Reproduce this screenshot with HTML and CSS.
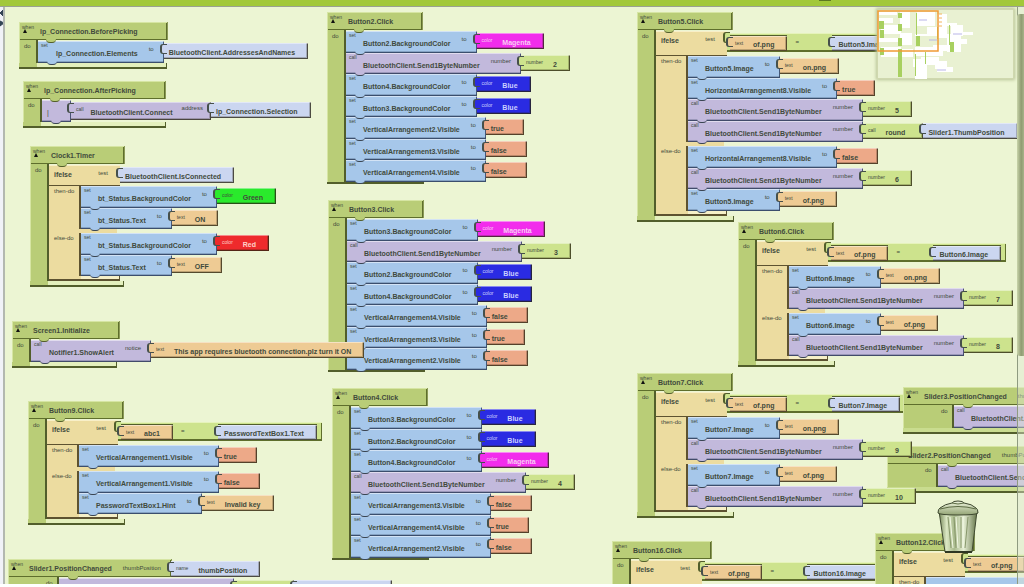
FILE: index.html
```html
<!DOCTYPE html>
<html lang="en">
<head>
<meta charset="utf-8">
<title>Blocks Editor</title>
<link rel="stylesheet" href="styles.css">
</head>
<body>
<header class="topbar"><span class="grip"></span></header>
<div class="frame">
<aside class="gutter"><svg width="5" height="24" viewBox="0 0 5 24"><path d="M4 2L0 6l4 4M0 14v5l4-3z" fill="#345" stroke="#345"/></svg></aside>
<main class="canvas">

<section class="event button5">
  <div class="head"><span class="when">when</span><h2>Button5.Click</h2></div>
  <div class="body"><span class="do">do</span>
    <div class="ifelse">
      <div class="row"><div class="test"><span>ifelse</span><span class="s">test</span></div><div class="eq"><div class="val text"><span class="k">text</span>of.png</div><span class="sign">=</span><div class="val get">Button5.Image</div></div></div>
      <div class="branch"><span class="s">then-do</span><div class="stack">
        <div class="row"><div class="op set"><span class="k">set</span>Button5.Image<span class="s">to</span></div><div class="val text"><span class="k">text</span>on.png</div></div>
        <div class="row"><div class="op set"><span class="k">set</span>HorizontalArrangement8.Visible<span class="s">to</span></div><div class="val logic">true</div></div>
        <div class="row"><div class="op call"><span class="k">call</span>BluetoothClient.Send1ByteNumber<span class="s">number</span></div><div class="val num"><span class="k">number</span>5</div></div>
        <div class="row"><div class="op call"><span class="k">call</span>BluetoothClient.Send1ByteNumber<span class="s">number</span></div><div class="val num"><span class="k">call</span>round</div><div class="val get">Slider1.ThumbPosition</div></div>
      </div></div>
      <div class="branch"><span class="s">else-do</span><div class="stack">
        <div class="row"><div class="op set"><span class="k">set</span>HorizontalArrangement8.Visible<span class="s">to</span></div><div class="val logic">false</div></div>
        <div class="row"><div class="op call"><span class="k">call</span>BluetoothClient.Send1ByteNumber<span class="s">number</span></div><div class="val num"><span class="k">number</span>6</div></div>
        <div class="row"><div class="op set"><span class="k">set</span>Button5.Image<span class="s">to</span></div><div class="val text"><span class="k">text</span>of.png</div></div>
      </div></div>
      <div class="foot"></div>
    </div>
  </div>
  <div class="foot"></div>
</section>

<section class="event button6">
  <div class="head"><span class="when">when</span><h2>Button6.Click</h2></div>
  <div class="body"><span class="do">do</span>
    <div class="ifelse">
      <div class="row"><div class="test"><span>ifelse</span><span class="s">test</span></div><div class="eq"><div class="val text"><span class="k">text</span>of.png</div><span class="sign">=</span><div class="val get">Button6.Image</div></div></div>
      <div class="branch"><span class="s">then-do</span><div class="stack">
        <div class="row"><div class="op set"><span class="k">set</span>Button6.Image<span class="s">to</span></div><div class="val text"><span class="k">text</span>on.png</div></div>
        <div class="row"><div class="op call"><span class="k">call</span>BluetoothClient.Send1ByteNumber<span class="s">number</span></div><div class="val num"><span class="k">number</span>7</div></div>
      </div></div>
      <div class="branch"><span class="s">else-do</span><div class="stack">
        <div class="row"><div class="op set"><span class="k">set</span>Button6.Image<span class="s">to</span></div><div class="val text"><span class="k">text</span>of.png</div></div>
        <div class="row"><div class="op call"><span class="k">call</span>BluetoothClient.Send1ByteNumber<span class="s">number</span></div><div class="val num"><span class="k">number</span>8</div></div>
      </div></div>
      <div class="foot"></div>
    </div>
  </div>
  <div class="foot"></div>
</section>

<section class="event slider2">
  <div class="head wide"><span class="when"></span><h2>Slider2.PositionChanged</h2><span class="s">thumbPosition</span></div>
  <div class="body"><span class="do">do</span>
    <div class="stack">
      <div class="row"><div class="op call"><span class="k">call</span>BluetoothClient.Send1ByteNumber<span class="s">number</span></div></div>
    </div>
  </div>
  <div class="foot"></div>
</section>

<section class="event button7">
  <div class="head"><span class="when">when</span><h2>Button7.Click</h2></div>
  <div class="body"><span class="do">do</span>
    <div class="ifelse">
      <div class="row"><div class="test"><span>ifelse</span><span class="s">test</span></div><div class="eq"><div class="val text"><span class="k">text</span>of.png</div><span class="sign">=</span><div class="val get">Button7.Image</div></div></div>
      <div class="branch"><span class="s">then-do</span><div class="stack">
        <div class="row"><div class="op set"><span class="k">set</span>Button7.Image<span class="s">to</span></div><div class="val text"><span class="k">text</span>on.png</div></div>
        <div class="row"><div class="op call"><span class="k">call</span>BluetoothClient.Send1ByteNumber<span class="s">number</span></div><div class="val num"><span class="k">number</span>9</div></div>
      </div></div>
      <div class="branch"><span class="s">else-do</span><div class="stack">
        <div class="row"><div class="op set"><span class="k">set</span>Button7.Image<span class="s">to</span></div><div class="val text"><span class="k">text</span>of.png</div></div>
        <div class="row"><div class="op call"><span class="k">call</span>BluetoothClient.Send1ByteNumber<span class="s">number</span></div><div class="val num"><span class="k">number</span>10</div></div>
      </div></div>
      <div class="foot"></div>
    </div>
  </div>
  <div class="foot"></div>
</section>

<section class="event slider3">
  <div class="head wide"><span class="when">when</span><h2>Slider3.PositionChanged</h2><span class="s">thumbPosition</span></div>
  <div class="body"><span class="do">do</span>
    <div class="stack">
      <div class="row"><div class="op call"><span class="k">call</span>BluetoothClient.Send1ByteNumber<span class="s">number</span></div></div>
    </div>
  </div>
  <div class="foot"></div>
</section>

<section class="event button16">
  <div class="head"><span class="when">when</span><h2>Button16.Click</h2></div>
  <div class="body"><span class="do">do</span>
    <div class="ifelse">
      <div class="row"><div class="test"><span>ifelse</span><span class="s">test</span></div><div class="eq"><div class="val text"><span class="k">text</span>of.png</div><span class="sign">=</span><div class="val get">Button16.Image</div></div></div>
    </div>
  </div>
</section>

<section class="event button12">
  <div class="head"><span class="when">when</span><h2>Button12.Click</h2></div>
  <div class="body"><span class="do">do</span>
    <div class="ifelse">
      <div class="row"><div class="test"><span>ifelse</span><span class="s">test</span></div><div class="eq"><div class="val text"><span class="k">text</span>of.png</div><span class="sign">=</span><div class="val get">Button12.Image</div></div></div>
      <div class="branch"><span class="s">then-do</span><div class="stack">
        <div class="row"><div class="op set blank"></div></div>
      </div></div>
    </div>
  </div>
</section>

<section class="event button2">
  <div class="head"><span class="when">when</span><h2>Button2.Click</h2></div>
  <div class="body"><span class="do">do</span>
    <div class="stack">
      <div class="row"><div class="op set"><span class="k">set</span>Button2.BackgroundColor<span class="s">to</span></div><div class="val magenta"><span class="k">color</span>Magenta</div></div>
      <div class="row"><div class="op call"><span class="k">call</span>BluetoothClient.Send1ByteNumber<span class="s">number</span></div><div class="val num"><span class="k">number</span>2</div></div>
      <div class="row"><div class="op set"><span class="k">set</span>Button4.BackgroundColor<span class="s">to</span></div><div class="val blue"><span class="k">color</span>Blue</div></div>
      <div class="row"><div class="op set"><span class="k">set</span>Button3.BackgroundColor<span class="s">to</span></div><div class="val blue"><span class="k">color</span>Blue</div></div>
      <div class="row"><div class="op set"><span class="k">set</span>VerticalArrangement2.Visible<span class="s">to</span></div><div class="val logic">true</div></div>
      <div class="row"><div class="op set"><span class="k">set</span>VerticalArrangement3.Visible<span class="s">to</span></div><div class="val logic">false</div></div>
      <div class="row"><div class="op set"><span class="k">set</span>VerticalArrangement4.Visible<span class="s">to</span></div><div class="val logic">false</div></div>
    </div>
  </div>
  <div class="foot"></div>
</section>

<section class="event button3">
  <div class="head"><span class="when">when</span><h2>Button3.Click</h2></div>
  <div class="body"><span class="do">do</span>
    <div class="stack">
      <div class="row"><div class="op set"><span class="k">set</span>Button3.BackgroundColor<span class="s">to</span></div><div class="val magenta"><span class="k">color</span>Magenta</div></div>
      <div class="row"><div class="op call"><span class="k">call</span>BluetoothClient.Send1ByteNumber<span class="s">number</span></div><div class="val num"><span class="k">number</span>3</div></div>
      <div class="row"><div class="op set"><span class="k">set</span>Button2.BackgroundColor<span class="s">to</span></div><div class="val blue"><span class="k">color</span>Blue</div></div>
      <div class="row"><div class="op set"><span class="k">set</span>Button4.BackgroundColor<span class="s">to</span></div><div class="val blue"><span class="k">color</span>Blue</div></div>
      <div class="row"><div class="op set"><span class="k">set</span>VerticalArrangement4.Visible<span class="s">to</span></div><div class="val logic">false</div></div>
      <div class="row"><div class="op set"><span class="k">set</span>VerticalArrangement3.Visible<span class="s">to</span></div><div class="val logic">true</div></div>
      <div class="row"><div class="op set"><span class="k">set</span>VerticalArrangement2.Visible<span class="s">to</span></div><div class="val logic">false</div></div>
    </div>
  </div>
  <div class="foot"></div>
</section>

<section class="event button4">
  <div class="head"><span class="when">when</span><h2>Button4.Click</h2></div>
  <div class="body"><span class="do">do</span>
    <div class="stack">
      <div class="row"><div class="op set"><span class="k">set</span>Button3.BackgroundColor<span class="s">to</span></div><div class="val blue"><span class="k">color</span>Blue</div></div>
      <div class="row"><div class="op set"><span class="k">set</span>Button2.BackgroundColor<span class="s">to</span></div><div class="val blue"><span class="k">color</span>Blue</div></div>
      <div class="row"><div class="op set"><span class="k">set</span>Button4.BackgroundColor<span class="s">to</span></div><div class="val magenta"><span class="k">color</span>Magenta</div></div>
      <div class="row"><div class="op call"><span class="k">call</span>BluetoothClient.Send1ByteNumber<span class="s">number</span></div><div class="val num"><span class="k">number</span>4</div></div>
      <div class="row"><div class="op set"><span class="k">set</span>VerticalArrangement3.Visible<span class="s">to</span></div><div class="val logic">false</div></div>
      <div class="row"><div class="op set"><span class="k">set</span>VerticalArrangement4.Visible<span class="s">to</span></div><div class="val logic">true</div></div>
      <div class="row"><div class="op set"><span class="k">set</span>VerticalArrangement2.Visible<span class="s">to</span></div><div class="val logic">false</div></div>
    </div>
  </div>
  <div class="foot"></div>
</section>

<section class="event before open">
  <div class="head"><span class="when">when</span><h2>lp_Connection.BeforePicking</h2></div>
  <div class="body"><span class="do">do</span>
    <div class="stack">
      <div class="row"><div class="op set"><span class="k">set</span>lp_Connection.Elements<span class="s">to</span></div><div class="val get">BluetoothClient.AddressesAndNames</div></div>
    </div>
  </div>
  <div class="foot"></div>
</section>

<section class="event after open">
  <div class="head"><span class="when">when</span><h2>lp_Connection.AfterPicking</h2></div>
  <div class="body"><span class="do">do</span>
    <div class="stack">
      <div class="row"><div class="op call slim">|</div><div class="val call fn"><span class="k">call</span>BluetoothClient.Connect<span class="s">address</span></div><div class="val get">lp_Connection.Selection</div></div>
    </div>
  </div>
  <div class="foot"></div>
</section>

<section class="event clock">
  <div class="head"><span class="when">when</span><h2>Clock1.Timer</h2></div>
  <div class="body"><span class="do">do</span>
    <div class="ifelse">
      <div class="row"><div class="test"><span>ifelse</span><span class="s">test</span></div><div class="val get">BluetoothClient.IsConnected</div></div>
      <div class="branch"><span class="s">then-do</span><div class="stack">
        <div class="row"><div class="op set"><span class="k">set</span>bt_Status.BackgroundColor<span class="s">to</span></div><div class="val green"><span class="k">color</span>Green</div></div>
        <div class="row"><div class="op set"><span class="k">set</span>bt_Status.Text<span class="s">to</span></div><div class="val text"><span class="k">text</span>ON</div></div>
      </div></div>
      <div class="branch"><span class="s">else-do</span><div class="stack">
        <div class="row"><div class="op set"><span class="k">set</span>bt_Status.BackgroundColor<span class="s">to</span></div><div class="val red"><span class="k">color</span>Red</div></div>
        <div class="row"><div class="op set"><span class="k">set</span>bt_Status.Text<span class="s">to</span></div><div class="val text"><span class="k">text</span>OFF</div></div>
      </div></div>
      <div class="foot"></div>
    </div>
  </div>
  <div class="foot"></div>
</section>

<section class="event screen1 open">
  <div class="head"><span class="when">when</span><h2>Screen1.Initialize</h2></div>
  <div class="body"><span class="do">do</span>
    <div class="stack">
      <div class="row"><div class="op call"><span class="k">call</span>Notifier1.ShowAlert<span class="s">notice</span></div><div class="val text"><span class="k">text</span>This app requires bluetooth connection.plz turn it ON</div></div>
    </div>
  </div>
  <div class="foot"></div>
</section>

<section class="event button9">
  <div class="head"><span class="when">when</span><h2>Button9.Click</h2></div>
  <div class="body"><span class="do">do</span>
    <div class="ifelse">
      <div class="row"><div class="test"><span>ifelse</span><span class="s">test</span></div><div class="eq"><div class="val text"><span class="k">text</span>abc1</div><span class="sign">=</span><div class="val get">PasswordTextBox1.Text</div></div></div>
      <div class="branch"><span class="s">then-do</span><div class="stack">
        <div class="row"><div class="op set"><span class="k">set</span>VerticalArrangement1.Visible<span class="s">to</span></div><div class="val logic">true</div></div>
      </div></div>
      <div class="branch"><span class="s">else-do</span><div class="stack">
        <div class="row"><div class="op set"><span class="k">set</span>VerticalArrangement1.Visible<span class="s">to</span></div><div class="val logic">false</div></div>
        <div class="row"><div class="op set"><span class="k">set</span>PasswordTextBox1.Hint<span class="s">to</span></div><div class="val text"><span class="k">text</span>Invalid key</div></div>
      </div></div>
      <div class="foot"></div>
    </div>
  </div>
  <div class="foot"></div>
</section>

<section class="event slider1">
  <div class="row"><div class="head wide"><span class="when">when</span><h2>Slider1.PositionChanged</h2><span class="s">thumbPosition</span></div><div class="val get"><span class="k">name</span>thumbPosition</div></div>
  <div class="body"><span class="do">do</span>
    <div class="stack">
      <div class="row"><div class="op call blank"></div><div class="val num blank"></div><div class="val get blank"></div></div>
    </div>
  </div>
</section>

<div class="edge"></div>
<div class="thumb"></div>

<div class="minimap">
<svg viewBox="0 0 136 70" width="136" height="70">
  <g fill="#fff">
    <path d="M2 3h18v3H2zM2 9h14v5H2zM4 16h20v9H4zM2 29h22v4H2zM4 38h20v10H4zM23 3h10v16H23zM23 24h12v12H23zM24 40h12v8H24zM40 3h18v14H40zM50 18h14v9H50zM38 25h18v2H38zM38 38h20v9H38zM60 5h10v24H60zM64 14h16v3H64zM56 36h14v6H56zM70 25h14v18H70zM74 16h12v11H74zM36 50h14v8H36zM38 56h12v14H38zM52 42h14v5H52zM44 48h18v8H44zM58 52h12v8H58zM60 58h16v5H60zM76 30h14v5H76zM80 23h16v3H80z"/>
  </g>
  <g fill="#a8d060">
    <path d="M21 4h4v5h-4zM21 15h4v7h-4zM21 29h4v8h-4zM21 40h4v7h-4zM2 12h5v8H2zM3 21h4v8H3zM3 39h4v7H3zM39 4h1v22h-1zM39 27h4v10h-4zM21 43h4v25h-4zM72 16h1v20h-1zM73 33h4v10h-4zM38 45h1v22h-1zM48 43h1v12h-1zM60 18h1v12h-1z"/>
  </g>
  <path d="M42 11h8M76 25h9M60 61h9M52 31h8" stroke="#b9b5e8" stroke-width="1"/>
  <path d="M62 5h3M62 9h3M62 13h3M62 17h3" stroke="#f3b45c"/>
  <rect x="1" y="2" width="60" height="40" fill="none" stroke="#f09a35" stroke-width="1.5"/>
</svg>
</div>

<svg class="trash" viewBox="0 0 44 56" width="44" height="56">
  <defs>
    <linearGradient id="can" x1="0" x2="1" y1="0" y2="0"><stop offset="0" stop-color="#76885a"/><stop offset=".2" stop-color="#dbe7c3"/><stop offset=".4" stop-color="#a9ba8d"/><stop offset=".65" stop-color="#e6efd4"/><stop offset="1" stop-color="#66764a"/></linearGradient>
    <linearGradient id="lid" x1="0" x2="0" y1="0" y2="1"><stop offset="0" stop-color="#eef5de"/><stop offset="1" stop-color="#93a475"/></linearGradient>
  </defs>
  <path d="M3 12L9 53h27l5-41z" fill="url(#can)" stroke="#3e482f" stroke-width="1"/>
  <path d="M12 18l3 31M18 18l2 31M25 18v31M32 18l-3 31" stroke="#87976b" stroke-width="1" fill="none"/>
  <path d="M14 18l3 31M20 18l2 31M27 18v31" stroke="#f2f8e4" stroke-width="1" fill="none"/>
  <path d="M2 14q0-4 2-5 5-4 12-5 1-2 6-2t6 2q8 1 12 5 2 1 2 5-2 2-20 2T2 14z" fill="url(#lid)" stroke="#3e482f" stroke-width="1"/>
  <path d="M4 10q18-5 36 0M16 4q6 2 12 0" fill="none" stroke="#5c6b43" stroke-width="1"/>
  <path d="M9 53h27" fill="none" stroke="#2d3622" stroke-width="2"/>
</svg>
</main>
</div>
</body>
</html>
```

FILE: styles.css
```css
* { box-sizing: border-box; }

body {
  margin: 0;
  height: 100vh;
  display: flex;
  flex-direction: column;
  overflow: hidden;
  background: #fff;
  color: #414a3c;
  font: bold 7px/9px "Liberation Sans", Arial, sans-serif;
}

.topbar {
  flex: none;
  height: 7px;
  background: #a2c83a;
  border-bottom: 1px solid #9aa192;
}
.grip {
  display: block;
  width: 12px;
  height: 1px;
  margin-left: 80%;
  background: #5d7722;
}

.frame {
  flex: 1;
  display: flex;
  margin-bottom: 3px;
  min-height: 0;
}
.gutter {
  flex: none;
  width: 5px;
  background: #f1f2f8;
  border-right: 2px solid #b3b8b0;
  overflow: hidden;
}
.canvas {
  flex: 1;
  position: relative;
  overflow: hidden;
  background: #ecf5d3;
}

/* Event blocks on the free canvas */
.event { position: absolute; width: max-content; isolation: isolate; }
.before { left: 14px; top: 15px; }
.after { left: 18px; top: 74px; }
.clock { left: 25px; top: 139px; }
.screen1 { left: 7px; top: 314px; }
.button9 { left: 23px; top: 394px; }
.slider1 { left: 3px; top: 552px; }
.button2 { left: 322px; top: 5px; }
.button3 { left: 323px; top: 193px; }
.button4 { left: 327px; top: 381px; }
.button5 { left: 632px; top: 5px; }
.button6 { left: 733px; top: 215px; }
.button7 { left: 632px; top: 366px; }
.slider3 { left: 898px; top: 380px; }
.slider2 { left: 882px; top: 439px; }
.button16 { left: 607px; top: 534px; }
.button12 { left: 870px; top: 526px; }

.head {
  position: relative;
  display: flex;
  align-items: center;
  width: max-content;
  height: 18px;
  padding-right: 29px;
  background: #b9cd77;
  box-shadow: inset 1px 1px #d6e5a3, inset -1px -1px #5e6e2c, 1px 0 #8b9a57;
}
.head.wide { padding-right: 10px; gap: 11px; }
.head.wide .when { margin-right: -11px; }
.head h2 { margin: 0; font: inherit; }
.when {
  position: relative;
  align-self: flex-start;
  width: 21px;
  padding: 2px 0 0 3px;
  font-size: 5px;
  font-weight: normal;
  line-height: 6px;
}
.when::after {
  content: "";
  position: absolute;
  left: 4px;
  top: 7px;
  border: 2px solid transparent;
  border-bottom: 4px solid #111;
  border-top: 0;
}

.body {
  display: flex;
  width: max-content;
  margin-top: -1px;
  padding-top: 2px;
  background: linear-gradient(90deg, #d6e5a3 1px, #b9cd77 1px, #b9cd77 17px, #525e2b 17px, #525e2b 19px, transparent 19px);
}
.do {
  width: 19px;
  padding: 2px 0 0 5px;
  font-size: 6px;
  font-weight: normal;
  line-height: 6px;
}
.slider1 .body, .slider2 .body, .slider3 .body {
  background: linear-gradient(90deg, #d6e5a3 1px, #b9cd77 1px, #b9cd77 49px, #525e2b 49px, #525e2b 51px, transparent 51px);
}
.slider1 .do, .slider2 .do, .slider3 .do { width: 51px; padding-left: 38px; }

.event > .foot {
  width: 97px;
  height: 2px;
  background: #525e2b;
}
.event.open > .foot,
.button5 > .foot, .button6 > .foot, .button7 > .foot, .button9 > .foot,
.clock > .foot, .slider2 > .foot, .slider3 > .foot {
  height: 6px;
  border-bottom: 2px solid #525e2b;
  border-right: 1px solid #525e2b;
  background: linear-gradient(90deg, #b9cd77 18px, #e4f0bd 18px);
}
.event.before > .foot { width: 148px; }
.event.after > .foot { width: 143px; }
.event.clock > .foot { width: 94px; }
.event.screen1 > .foot { width: 105px; }
.event.slider2 > .foot, .event.slider3 > .foot { width: 200px; background: #c9dc8f; }

.row { display: flex; align-items: flex-start; }

/* Statement blocks */
.op {
  position: relative;
  display: flex;
  align-items: center;
  height: 21px;
  padding: 3px 10px 0 0;
  box-shadow: inset 0 1px rgba(255, 255, 255, .5), inset -1px -1px rgba(35, 50, 80, .75), inset 0 -2px rgba(35, 50, 80, .25);
}
.stack > .row:nth-child(odd) > .op { height: 22px; }
.op .k { width: 17px; padding-left: 3px; margin-top: -2px; }
.open .op .k { width: 18px; }
.set { background-color: #a6c7ea; }
.call { background-color: #c2b9dc; }

.op::after, .head::after {
  content: "";
  position: absolute;
  z-index: 1;
  left: 9px;
  bottom: -2px;
  width: 10px;
  height: 4px;
  border-bottom: 1px solid #3a4552;
  border-radius: 0 0 4px 4px;
  background: inherit;
}
.head::after { left: 27px; bottom: -3px; border-color: #525e2b; }
.wide::after { left: 60px; }

.k {
  align-self: flex-start;
  font-size: 5px;
  font-weight: normal;
  line-height: 6px;
}
.s {
  font-size: 6px;
  font-weight: normal;
  line-height: 6px;
}
.op .s { align-self: flex-start; margin: 2px 0 0 11px; }
.slim { width: 29px; padding-left: 5px; font-weight: normal; }

/* Value blocks */
.val {
  position: relative;
  display: flex;
  align-items: center;
  height: 16px;
  margin-top: 2px;
  padding: 2px 13px 0 5px;
  box-shadow: inset 0 1px rgba(255, 255, 255, .45), inset -1px -1px rgba(40, 35, 15, .7), inset -2px -2px rgba(40, 35, 15, .25);
}
.val::before {
  content: "";
  position: absolute;
  left: -4px;
  top: 1px;
  width: 5px;
  height: 8px;
  border: 1px solid #46504b;
  border-width: 1px 0 1px 2px;
  border-radius: 3px 0 0 3px;
  background: inherit;
}
.val .k { margin: 2px 10px 0 0; }
.get { background-color: #cbd6f0; }
.text { background-color: #eecb94; }
.num { background-color: #cde38d; }
.num:has(+ .get) { padding-right: 18px; }
.logic { background-color: #eda988; padding-right: 20px; }
.magenta { background-color: #f22cec; color: #f9cdf4; }
.blue { background-color: #2a2be2; color: #cbd0ff; }
.green { background-color: #2aea2c; }
.red { background-color: #ee2a2c; color: #ffd2c8; }
.fn { height: 18px; padding-right: 8px; background-color: #c2b9dc; }
.fn .k { margin-right: 7px; }
.fn .s { align-self: flex-start; margin: 1px 0 0 9px; }

.blank { width: 60px; }
.op.blank { width: 175px; }
.get.blank { width: 98px; }

/* Conditional blocks */
.ifelse {
  background: linear-gradient(90deg, #ecdca0 30px, #5d5230 30px, #5d5230 32px, transparent 32px);
}
.test {
  display: flex;
  align-items: center;
  justify-content: space-between;
  width: 71px;
  height: 21px;
  padding: 0 12px 2px 5px;
  background: #ecdca0;
  border-bottom: 1px solid #5d5230;
  box-shadow: inset 0 1px #f8efc8;
}
.row:has(> .eq) > .test { height: 25px; padding-bottom: 5px; }
.test .s { margin-top: -3px; }
.branch { display: flex; }
.branch > .s { width: 32px; padding: 2px 0 0 5px; }
.branch + .branch { border-top: 4px solid #ecdca0; border-image: linear-gradient(90deg, #ecdca0 70px, transparent 70px) 4; border-image-width: 4px 0 0; }
.ifelse > .foot {
  width: 71px;
  height: 5px;
  border-bottom: 2px solid #5d5230;
  border-right: 1px solid #5d5230;
  background: linear-gradient(90deg, #ecdca0 32px, #f6f0c8 32px);
}

.eq {
  position: relative;
  display: flex;
  align-items: flex-start;
  height: 19px;
  margin-top: 2px;
  padding: 0 5px 0 3px;
  background: #cde38d;
  box-shadow: inset 0 1px #e6f3bb, inset -1px -2px #5e6e2c;
}
.eq::before {
  content: "";
  position: absolute;
  left: -4px;
  top: -1px;
  width: 5px;
  height: 9px;
  border: 1px solid #525e2b;
  border-width: 1px 0 1px 2px;
  border-radius: 3px 0 0 3px;
  background: inherit;
}
.eq .val { border-top: 1px solid #525e2b; }
.eq .get { padding-left: 6px; }
.sign { width: 45px; padding: 5px 0 0 8px; font-size: 6px; }

/* Overlays */
.minimap {
  position: absolute;
  right: 10px;
  top: 2px;
  width: 137px;
  height: 70px;
  background: #e9f1d2;
  box-shadow: inset 0 0 0 1px #cfd8ae, 0 0 3px 1px #b9c497;
}
.edge {
  position: absolute;
  right: 0;
  top: 0;
  bottom: 0;
  width: 7px;
  border-left: 1px solid #8f9b80;
  background: rgba(225, 232, 210, .45);
}
.thumb {
  position: absolute;
  right: 0;
  top: 7px;
  width: 7px;
  height: 342px;
  border-radius: 3px 0 0 3px;
  background: linear-gradient(90deg, #c9d5aa, #8f9b72 60%, #a7b38a);
}
.trash { position: absolute; right: 44px; bottom: 29px; }
```
